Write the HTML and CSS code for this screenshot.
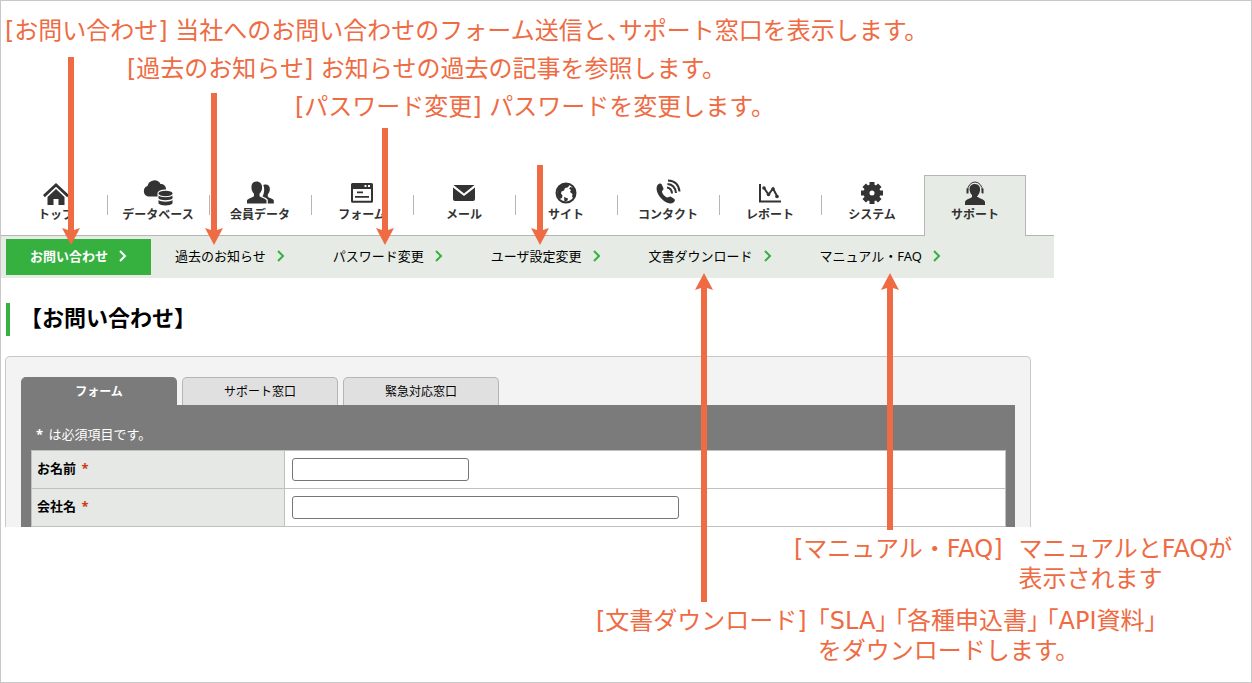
FILE: index.html
```html
<!DOCTYPE html>
<html lang="ja">
<head>
    <meta charset="UTF-8">
    <meta name="viewport" content="width=device-width, initial-scale=1.0">
    <title>お問い合わせ</title>
    <link rel="stylesheet" href="styles.css">
</head>
<body>
    <div class="notes notes-top">
        <p>[お問い合わせ] 当社へのお問い合わせのフォーム送信と<span class="half">、</span>サポート窓口を表示します。</p>
        <p class="indent-1">[過去のお知らせ] お知らせの過去の記事を参照します。</p>
        <p class="indent-2">[パスワード変更] パスワードを変更します。</p>
    </div>

    <header>
        <nav class="menu">
            <a href="#">
                <svg viewBox="0 0 32 28"><path d="M16 4 3 16l1.800 2.200L16 7.800l11.200 10.400L29 16zM16 10l-8.500 8v8h6v-6h5v6h6v-8z"/></svg>
                <span>トップ</span>
            </a>
            <a href="#">
                <svg viewBox="0 0 32 28"><path d="M6 17.500a5.500 5.500 0 0 1-.5-10.500A7 7 0 0 1 18.500 5a5 5 0 0 1 5.500 5.500c-5 0-8.500 1.500-8.500 4v3z"/><ellipse cx="23.500" cy="14.500" rx="7" ry="2.700"/><path d="M16.500 16.500c2 2.300 12 2.300 14 0v3c-2 2.300-12 2.300-14 0zM16.500 21c2 2.300 12 2.300 14 0v3.500c-2 2.500-12 2.500-14 0z"/></svg>
                <span>データベース</span>
            </a>
            <a href="#">
                <svg viewBox="0 0 32 28"><path d="M12.500 2.500c4 0 6 3 5.500 7-.3 2.500-1.300 4-2.500 5.300v2.200c.5 1.500 6.500 2.500 7 4.500v3H3v-3c.5-2 6.500-3 7-4.500v-2.200c-1.200-1.300-2.200-2.800-2.500-5.300-.5-4 1-7 5-7zM19.300 6c4-1.500 7 .5 6.500 5-.2 2-1 3.300-2 4.300v2.200c.5 1.500 5.500 2 6 4v3h-6v-3.500c-.5-2-4-2.700-5.300-3.500 1.500-2 2.500-8 .8-11.500z"/></svg>
                <span>会員データ</span>
            </a>
            <a href="#">
                <svg viewBox="0 0 32 28"><path fill-rule="evenodd" d="M5 5.500A1.500 1.500 0 0 1 6.500 4h19A1.500 1.500 0 0 1 27 5.500v16.700a1.500 1.500 0 0 1-1.500 1.500h-19A1.500 1.500 0 0 1 5 22.200zM7 10v11.700h18V10zM18.500 6v2h2V6zm3.500 0v2h2V6zM11 12.500h6v1.700h-6zm-2 4.500h14v1.700H9z"/></svg>
                <span>フォーム</span>
            </a>
            <a href="#">
                <svg viewBox="0 0 32 28"><path d="M5.500 6h21L16 14.500zM5 8.500l11 8.500 11-8.500V20a2 2 0 0 1-2 2H7a2 2 0 0 1-2-2z"/></svg>
                <span>メール</span>
            </a>
            <a href="#">
                <svg viewBox="0 0 32 28"><circle class="line" cx="16" cy="14" r="9.500"/><path d="M12 5l6-.5 1.500 2-2 2-2.500.5-1 2.500-2.500 1-.5 2 1.500 2-.5 2.500-2.500 1L7 15l1-6zM20.500 8l3.500 1 2 5-2 5-2-1 .5-3-2.500-2 1-2-2-1.500zM14 18l4 1.500-.5 2-3 1.500z"/></svg>
                <span>サイト</span>
            </a>
            <a href="#">
                <svg viewBox="0 0 32 28"><path d="M6 5.500c1.500-1.500 3-1.500 4 .5l1.500 3.500c.5 1.500-2 2-1.500 3.500.8 2.500 2.500 4.500 5 5.500 1.500.5 2.500-1.500 4-.7l3 2c1.500 1 1 2.500-.5 3.700-2.500 1.800-6 1-9.500-1.500-3.500-2.700-6-6-7-9.500-.8-3-.5-5.500 1-7z"/><path class="line" d="M15 8.500q4.500.5 5 6M15.500 5q7.500.5 8.500 9M16 1.500q10.500.5 11.500 11"/></svg>
                <span>コンタクト</span>
            </a>
            <a href="#">
                <svg viewBox="0 0 32 28"><path class="line" d="M6 5v17.500h21M10 9l4.500 6.500L19 9.500l4 7.500"/><circle cx="10" cy="9" r="1.800"/><circle cx="14.500" cy="15.500" r="1.800"/><circle cx="19" cy="10" r="1.800"/><circle cx="23" cy="17.500" r="1.800"/></svg>
                <span>レポート</span>
            </a>
            <a href="#">
                <svg viewBox="0 0 32 28"><circle class="gear" cx="16" cy="14" r="5.500"/><path class="teeth" d="M16 3v5M16 20v5M5 14h5M22 14h5M8.200 6.200l3.600 3.600M20.200 18.200l3.600 3.600M8.200 21.800l3.600-3.600M20.200 9.800l3.600-3.600"/></svg>
                <span>システム</span>
            </a>
            <a href="#" class="current">
                <svg viewBox="0 0 32 28"><path d="M16 5c4 0 5.500 3 5 6.500-.3 2-1 3.500-2 4.500v2c1 1.500 6.500 2 7 5v3H6v-3c.5-3 6-3.500 7-5v-2c-1.500-1.200-2.200-3-2.400-5C10.200 7.500 12 5 16 5z"/><path class="line thin" d="M8.500 12a7.500 9 0 0 1 15 0"/><path d="M7.500 9.500h2v5h-2zM22.500 9.500h2v5h-2z"/><path class="mic" d="M23 14q-1 3.500-5 3.500"/></svg>
                <span>サポート</span>
            </a>
        </nav>
        <nav class="submenu">
            <a href="#" class="current">お問い合わせ<svg viewBox="0 0 8 12"><path d="m1 1 5 5-5 5"/></svg></a>
            <a href="#">過去のお知らせ<svg viewBox="0 0 8 12"><path d="m1 1 5 5-5 5"/></svg></a>
            <a href="#">パスワード変更<svg viewBox="0 0 8 12"><path d="m1 1 5 5-5 5"/></svg></a>
            <a href="#">ユーザ設定変更<svg viewBox="0 0 8 12"><path d="m1 1 5 5-5 5"/></svg></a>
            <a href="#">文書ダウンロード<svg viewBox="0 0 8 12"><path d="m1 1 5 5-5 5"/></svg></a>
            <a href="#">マニュアル・FAQ<svg viewBox="0 0 8 12"><path d="m1 1 5 5-5 5"/></svg></a>
        </nav>
    </header>

    <main>
        <h1>【お問い合わせ】</h1>
        <div class="panel">
            <div class="tabs">
                <button type="button" class="active">フォーム</button>
                <button type="button">サポート窓口</button>
                <button type="button">緊急対応窓口</button>
            </div>
            <form class="form">
                <p><b>*</b> は必須項目です。</p>
                <table>
                    <tr>
                        <th><label for="name">お名前 <span class="required">*</span></label></th>
                        <td><input type="text" id="name" class="short"></td>
                    </tr>
                    <tr>
                        <th><label for="company">会社名 <span class="required">*</span></label></th>
                        <td><input type="text" id="company" class="long"></td>
                    </tr>
                </table>
            </form>
        </div>
    </main>

    <div class="notes notes-bottom">
        <div class="note note-manual">
            <span>[マニュアル・FAQ]</span>
            <p>マニュアルとFAQが<br>表示されます</p>
        </div>
        <div class="note note-document">
            <span>[文書ダウンロード]</span>
            <p><span class="half">「</span>SLA<span class="half">」</span> <span class="half">「</span>各種申込書<span class="half">」</span> <span class="half">「</span>API資料<span class="half">」</span><br>をダウンロードします。</p>
        </div>
    </div>

    <!-- arrows from the notes to the menu items -->
    <svg class="arrows" aria-hidden="true">
        <path d="M68 57h6v173l6-2-9 17-9-17 6 2z"/>
        <path d="M211 93h6v137l6-2-9 17-9-17 6 2z"/>
        <path d="M382 128h6v102l6-2-9 17-9-17 6 2z"/>
        <path d="M537 165h6v65l6-2-9 17-9-17 6 2z"/>
        <path d="M701 602h6V288l6 2-9-17-9 17 6-2z"/>
        <path d="M887 530h6V288l6 2-9-17-9 17 6-2z"/>
    </svg>
</body>
</html>
```

FILE: styles.css
```css
* {
    box-sizing: border-box;
}
body {
    position: relative;
    margin: 0;
    min-height: 100vh;
    border: 1px solid #c8c8c8;
    background-color: white;
    color: black;
    font-family: "Noto Sans", "Noto Sans CJK JP", sans-serif;
    font-size: 13px;
}
p {
    margin: 0;
}
a {
    color: inherit;
    text-decoration: none;
}

/* notes */
.notes {
    color: #ee6b43;
    font-family: "DejaVu Sans", "Noto Sans CJK JP", sans-serif;
    font-size: 24px;
    white-space: nowrap;
}
.notes-top {
    padding: 9px 4px 49px;
    line-height: 38px;
}
.indent-1 {
    padding-left: 122px;
}
.indent-2 {
    padding-left: 290px;
}
.half {
    font-family: "Noto Sans CJK JP", sans-serif;
    font-feature-settings: "halt";
}
.notes-bottom {
    padding-top: 7px;
    line-height: 30px;
}
.note {
    display: flex;
    align-items: baseline;
}
.note-manual {
    gap: 16px;
    padding-left: 793px;
}
.note-document {
    gap: 11px;
    padding-top: 10px;
    padding-left: 595px;
}

/* menu */
header {
    max-width: 1053px;
}
.menu {
    display: flex;
    height: 61px;
    padding-left: 5px;
    border-bottom: 1px solid #b5b5b5;
}
.menu a {
    position: relative;
    flex: 0 0 102px;
    display: flex;
    flex-direction: column;
    align-items: center;
    padding: 4px 2px 0 0;
    color: #333;
    font-size: 12px;
    font-weight: bold;
    line-height: 16px;
}
.menu a:nth-child(-n+8)::after {
    content: "";
    position: absolute;
    right: 0;
    top: 20px;
    width: 1px;
    height: 20px;
    background-color: #b5b5b5;
}
.menu .current {
    height: 61px;
    padding: 3px 0 0;
    border: 1px solid #b5b5b5;
    border-bottom: none;
    background-color: #e6ece5;
}
.menu svg {
    width: 32px;
    height: 28px;
    fill: #333;
}
.menu .line {
    fill: none;
    stroke: #333;
    stroke-width: 2;
}
.menu .thin {
    stroke-width: 1;
}
.menu .mic {
    fill: none;
    stroke: #e6ece5;
    stroke-width: 1;
}
.menu .gear {
    fill: none;
    stroke: #333;
    stroke-width: 6;
}
.menu .teeth {
    stroke: #333;
    stroke-width: 5;
}

/* submenu */
.submenu {
    display: flex;
    align-items: center;
    height: 42px;
    padding-left: 5px;
    background-color: #e6ece5;
}
.submenu a {
    display: flex;
    align-items: center;
    gap: 11px;
    height: 36px;
    padding: 0 24px 3px;
    white-space: nowrap;
}
.submenu svg {
    width: 8px;
    height: 12px;
    fill: none;
    stroke: #36b03f;
    stroke-width: 2;
}
.submenu .current {
    background-color: #36b03f;
    color: white;
    font-weight: bold;
}
.submenu .current svg {
    stroke: white;
}

/* form */
main {
    max-width: 1034px;
    padding: 25px 4px 0;
}
h1 {
    margin: 0 0 20px 1px;
    padding: 0 0 4px 10px;
    border-left: 4px solid #36b03f;
    font-size: 22px;
    line-height: 29px;
}
.panel {
    padding: 20px 15px 0;
    border: 1px solid #c8c8c8;
    border-bottom: none;
    border-radius: 5px 5px 0 0;
    background-color: #f3f3f3;
}
.tabs {
    display: flex;
    gap: 5px;
}
.tabs button {
    width: 156px;
    height: 28px;
    padding: 0 0 2px;
    border: 1px solid #b5b5b5;
    border-bottom: none;
    border-radius: 5px 5px 0 0;
    background-color: #e0e0e0;
    color: black;
    font-family: inherit;
    font-size: 12px;
}
.tabs .active {
    border-color: #7b7b7b;
    background-color: #7b7b7b;
    color: white;
    font-weight: bold;
}
.form {
    padding: 19px 9px 0 10px;
    background-color: #7b7b7b;
    color: white;
}
.form p {
    margin-bottom: 6px;
    padding-left: 5px;
    line-height: 20px;
}
.form b {
    margin-right: 2px;
}
table {
    width: 100%;
    border-collapse: collapse;
    background-color: white;
    color: black;
}
th, td {
    height: 38px;
    border: 1px solid #c0c0c0;
    vertical-align: middle;
    text-align: left;
}
th {
    width: 253px;
    padding: 0 5px 4px;
    background-color: #e5e8e5;
}
td {
    padding: 0 7px;
}
.required {
    margin-left: 2px;
    color: #d03a10;
}
input {
    display: block;
    height: 23px;
    border: 1px solid #767676;
    border-radius: 3px;
    background-color: white;
}
.short {
    width: 177px;
}
.long {
    width: 387px;
}

.arrows {
    position: absolute;
    top: -1px;
    left: -1px;
    width: 100%;
    height: 100%;
    fill: #ee6b43;
    pointer-events: none;
}
```
